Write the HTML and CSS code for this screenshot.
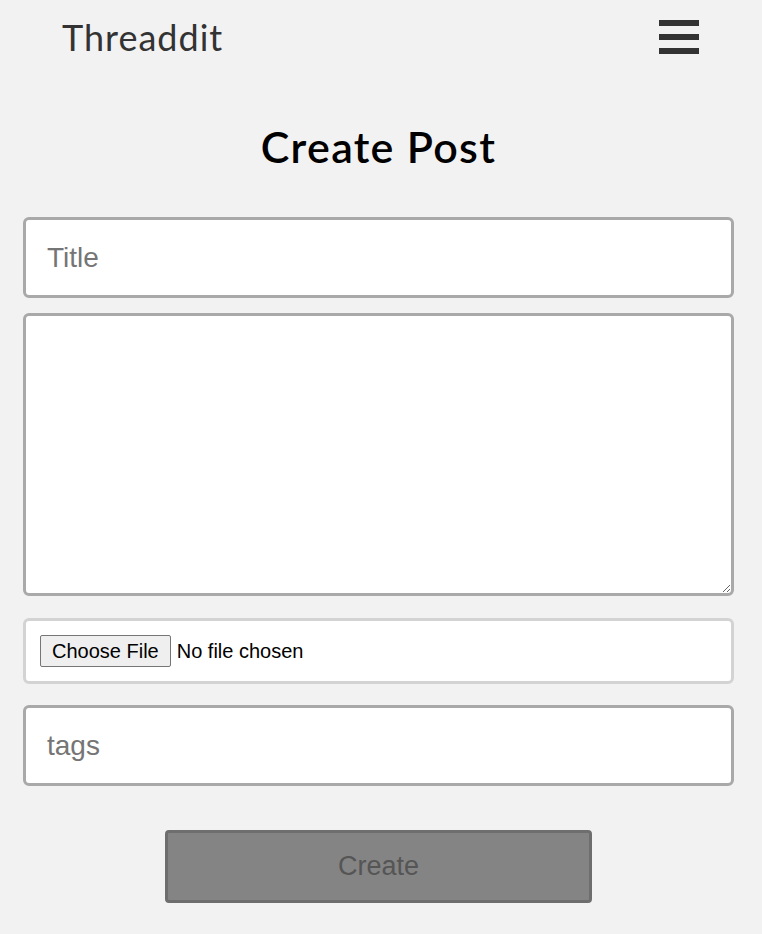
FILE: index.html
```html
<!DOCTYPE html>
<html lang="en">
<head>
<meta charset="utf-8">
<title>Threaddit - Create Post</title>
<link rel="stylesheet" href="styles.css">
</head>
<body>
<header class="header">
  <div class="brand">Threaddit</div>
  <div class="menu" aria-label="menu">
    <span class="bar"></span>
    <span class="bar"></span>
    <span class="bar"></span>
  </div>
</header>
<main class="main">
  <h1 class="page-title">Create Post</h1>
  <form class="post-form">
    <input class="field" type="text" placeholder="Title">
    <textarea class="field area"></textarea>
    <div class="file-box"><input class="file" type="file"></div>
    <input class="field tags" type="text" placeholder="tags">
    <button class="submit" type="button" disabled>Create</button>
  </form>
</main>
</body>
</html>
```
FILE: styles.css
```css
* { box-sizing: border-box; }
body {
  margin: 0;
  background: #f2f2f2;
  font-family: "Lato", "Liberation Sans", sans-serif;
}
.header {
  display: flex;
  justify-content: space-between;
  align-items: center;
  height: 74px;
  padding: 0 63px 0 62px;
}
.brand {
  font-size: 36px;
  color: #333;
  font-weight: 400;
  letter-spacing: 1px;
}
.menu {
  display: flex;
  flex-direction: column;
  gap: 8px;
  width: 40px;
}
.bar {
  display: block;
  height: 6px;
  background: #333;
}
.main { padding: 0 28px 0 23px; }
.page-title {
  margin: 48px 0 45px;
  text-align: center;
  font-size: 43px;
  line-height: 50px;
  font-weight: 600;
  letter-spacing: 1.3px;
  color: #000;
}
.post-form {
  display: flex;
  flex-direction: column;
}
.field {
  width: 100%;
  height: 81px;
  border: 3px solid #a9a9a9;
  border-radius: 6px;
  background: #fff;
  padding: 0 21px;
  font-family: "Liberation Sans", Arial, sans-serif;
  font-size: 28px;
  color: #222;
  outline: none;
}
.field::placeholder { color: #757575; }
.area {
  margin-top: 15px;
  height: 283px;
  padding: 10px 21px;
  resize: vertical;
}
.file-box {
  margin-top: 22px;
  height: 66px;
  border: 3px solid #d3d3d3;
  border-radius: 6px;
  background: #fff;
  padding: 14px;
  display: flex;
  align-items: center;
}
.file {
  font-family: "Liberation Sans", Arial, sans-serif;
  font-size: 20px;
  color: #000;
}
.file::file-selector-button {
  font-family: "Liberation Sans", Arial, sans-serif;
  font-size: 20px;
  height: 32px;
  padding: 0 11px;
  margin-right: 6px;
  background: #efefef;
  border: 1px solid #767676;
  border-radius: 2px;
  color: #000;
}
.tags { margin-top: 21px; }
.submit {
  margin: 44px auto 0;
  width: 427px;
  height: 73px;
  background: #848484;
  border: 3px solid #6e6e6e;
  border-radius: 4px;
  color: #555;
  font-family: "Liberation Sans", Arial, sans-serif;
  font-size: 27px;
}
```
